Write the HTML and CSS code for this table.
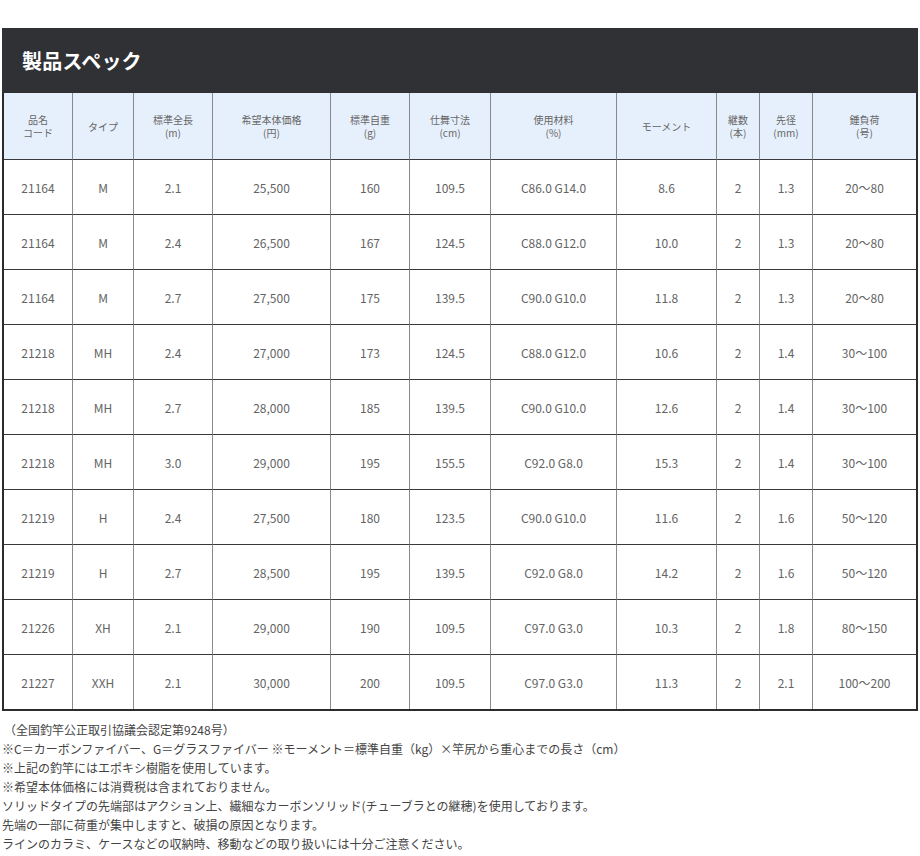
FILE: index.html
```html
<!DOCTYPE html>
<html lang="ja">
<head>
<meta charset="utf-8">
<title>製品スペック</title>
<link rel="stylesheet" href="styles.css">
</head>
<body>
<div class="page">
  <div class="title-bar"><h2 class="title">製品スペック</h2></div>
  <table class="spec">
    <colgroup>
      <col class="c-code"><col class="c-type"><col class="c-len"><col class="c-price"><col class="c-wt"><col class="c-close"><col class="c-mat"><col class="c-mom"><col class="c-pcs"><col class="c-tip"><col class="c-load">
    </colgroup>
    <thead>
      <tr>
        <th>品名<br>コード</th>
        <th>タイプ</th>
        <th>標準全長<br>(m)</th>
        <th>希望本体価格<br>(円)</th>
        <th>標準自重<br>(g)</th>
        <th>仕舞寸法<br>(cm)</th>
        <th>使用材料<br>(%)</th>
        <th>モーメント</th>
        <th>継数<br>(本)</th>
        <th>先径<br>(mm)</th>
        <th>錘負荷<br>(号)</th>
      </tr>
    </thead>
    <tbody>
      <tr><td>21164</td><td>M</td><td>2.1</td><td>25,500</td><td>160</td><td>109.5</td><td>C86.0 G14.0</td><td>8.6</td><td>2</td><td>1.3</td><td>20～80</td></tr>
      <tr><td>21164</td><td>M</td><td>2.4</td><td>26,500</td><td>167</td><td>124.5</td><td>C88.0 G12.0</td><td>10.0</td><td>2</td><td>1.3</td><td>20～80</td></tr>
      <tr><td>21164</td><td>M</td><td>2.7</td><td>27,500</td><td>175</td><td>139.5</td><td>C90.0 G10.0</td><td>11.8</td><td>2</td><td>1.3</td><td>20～80</td></tr>
      <tr><td>21218</td><td>MH</td><td>2.4</td><td>27,000</td><td>173</td><td>124.5</td><td>C88.0 G12.0</td><td>10.6</td><td>2</td><td>1.4</td><td>30～100</td></tr>
      <tr><td>21218</td><td>MH</td><td>2.7</td><td>28,000</td><td>185</td><td>139.5</td><td>C90.0 G10.0</td><td>12.6</td><td>2</td><td>1.4</td><td>30～100</td></tr>
      <tr><td>21218</td><td>MH</td><td>3.0</td><td>29,000</td><td>195</td><td>155.5</td><td>C92.0 G8.0</td><td>15.3</td><td>2</td><td>1.4</td><td>30～100</td></tr>
      <tr><td>21219</td><td>H</td><td>2.4</td><td>27,500</td><td>180</td><td>123.5</td><td>C90.0 G10.0</td><td>11.6</td><td>2</td><td>1.6</td><td>50～120</td></tr>
      <tr><td>21219</td><td>H</td><td>2.7</td><td>28,500</td><td>195</td><td>139.5</td><td>C92.0 G8.0</td><td>14.2</td><td>2</td><td>1.6</td><td>50～120</td></tr>
      <tr><td>21226</td><td>XH</td><td>2.1</td><td>29,000</td><td>190</td><td>109.5</td><td>C97.0 G3.0</td><td>10.3</td><td>2</td><td>1.8</td><td>80～150</td></tr>
      <tr><td>21227</td><td>XXH</td><td>2.1</td><td>30,000</td><td>200</td><td>109.5</td><td>C97.0 G3.0</td><td>11.3</td><td>2</td><td>2.1</td><td>100～200</td></tr>
    </tbody>
  </table>
  <div class="notes">
    <p class="note first">（全国釣竿公正取引協議会認定第9248号）</p>
    <p class="note">※C＝カーボンファイバー、G＝グラスファイバー ※モーメント＝標準自重（kg）×竿尻から重心までの長さ（cm）</p>
    <p class="note">※上記の釣竿にはエポキシ樹脂を使用しています。</p>
    <p class="note">※希望本体価格には消費税は含まれておりません。</p>
    <p class="note">ソリッドタイプの先端部はアクション上、繊細なカーボンソリッド(チューブラとの継穂)を使用しております。</p>
    <p class="note">先端の一部に荷重が集中しますと、破損の原因となります。</p>
    <p class="note">ラインのカラミ、ケースなどの収納時、移動などの取り扱いには十分ご注意ください。</p>
  </div>
</div>
</body>
</html>
```

FILE: styles.css
```css
html, body {
  margin: 0;
  padding: 0;
  background: #ffffff;
}

body {
  font-family: "Noto Sans CJK JP", "Noto Sans", sans-serif;
  color: #555;
}

.page {
  width: 916px;
  padding: 28px 0 0 2px;
}

.title-bar {
  height: 65px;
  background: #2f3134;
  display: flex;
  align-items: center;
  padding-left: 20px;
}

.title {
  margin: 0;
  color: #ffffff;
  font-size: 20px;
  font-weight: 700;
  letter-spacing: 0.2px;
}

.spec {
  width: 916px;
  table-layout: fixed;
  border-collapse: separate;
  border-spacing: 0;
  border: 2px solid #2b2b2b;
  border-top: 0;
}

.c-code { width: 69px; }
.c-type { width: 61px; }
.c-len { width: 79px; }
.c-price { width: 118px; }
.c-wt { width: 79px; }
.c-close { width: 81px; }
.c-mat { width: 126px; }
.c-mom { width: 100px; }
.c-pcs { width: 43px; }
.c-tip { width: 53px; }
.c-load { width: auto; }

.spec th,
.spec td {
  padding: 0;
  text-align: center;
  border-right: 1px solid #8a8a8a;
  border-bottom: 1px solid #3a3a3a;
}

.spec th:last-child,
.spec td:last-child {
  border-right: 0;
}

.spec tbody tr:last-child td {
  border-bottom: 0;
}

.spec th {
  height: 66px;
  background: #e6f0fc;
  font-size: 10px;
  line-height: 13px;
  font-weight: 400;
  color: #666;
}

.spec td {
  height: 54px;
  font-size: 12px;
  color: #646464;
}

.notes {
  padding-top: 9px;
}

.note {
  margin: 0;
  font-size: 12px;
  line-height: 19px;
  color: #444;
  white-space: nowrap;
}

.note.first {
  padding-left: 2px;
}
```
